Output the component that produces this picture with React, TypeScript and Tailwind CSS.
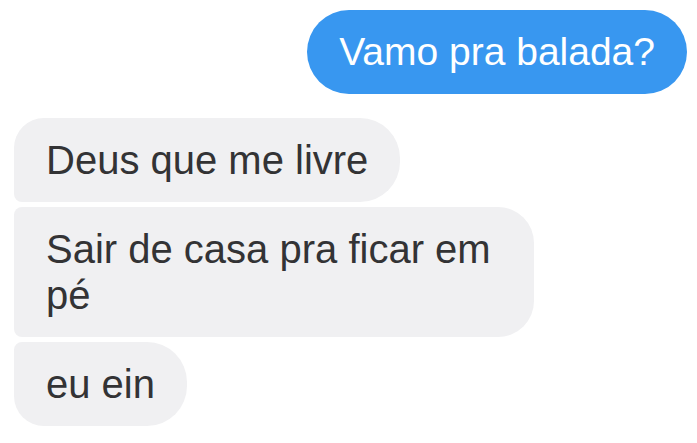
const incoming = [
  { text: "Deus que me livre", shape: "rounded-tl-[30px] rounded-bl-[8px] rounded-r-[40px]" },
  { text: "Sair de casa pra ficar em pé", shape: "rounded-l-[8px] rounded-r-[36px]" },
  { text: "eu ein", shape: "rounded-tl-[8px] rounded-bl-[30px] rounded-r-[40px]" },
];

export default function App() {
  return (
    <div
      className="w-[697px] h-[443px] bg-white flex flex-col pt-[10px] overflow-hidden"
      style={{ fontFamily: '"Liberation Sans", Arial, sans-serif' }}
    >
      <div className="flex justify-end pr-[10px]">
        <div className="bg-[#3897f0] text-white text-[39px] leading-[46px] px-8 py-[19px] rounded-full">
          Vamo pra balada?
        </div>
      </div>

      <div className="flex flex-col items-start gap-[5px] pl-[14px] mt-[24px]">
        {incoming.map((msg, i) => (
          <div
            key={i}
            className={
              "bg-[#f0f0f2] text-[#333335] text-[40px] leading-[46px] px-8 py-[19px] max-w-[520px] " +
              msg.shape
            }
          >
            {msg.text}
          </div>
        ))}
      </div>
    </div>
  );
}
